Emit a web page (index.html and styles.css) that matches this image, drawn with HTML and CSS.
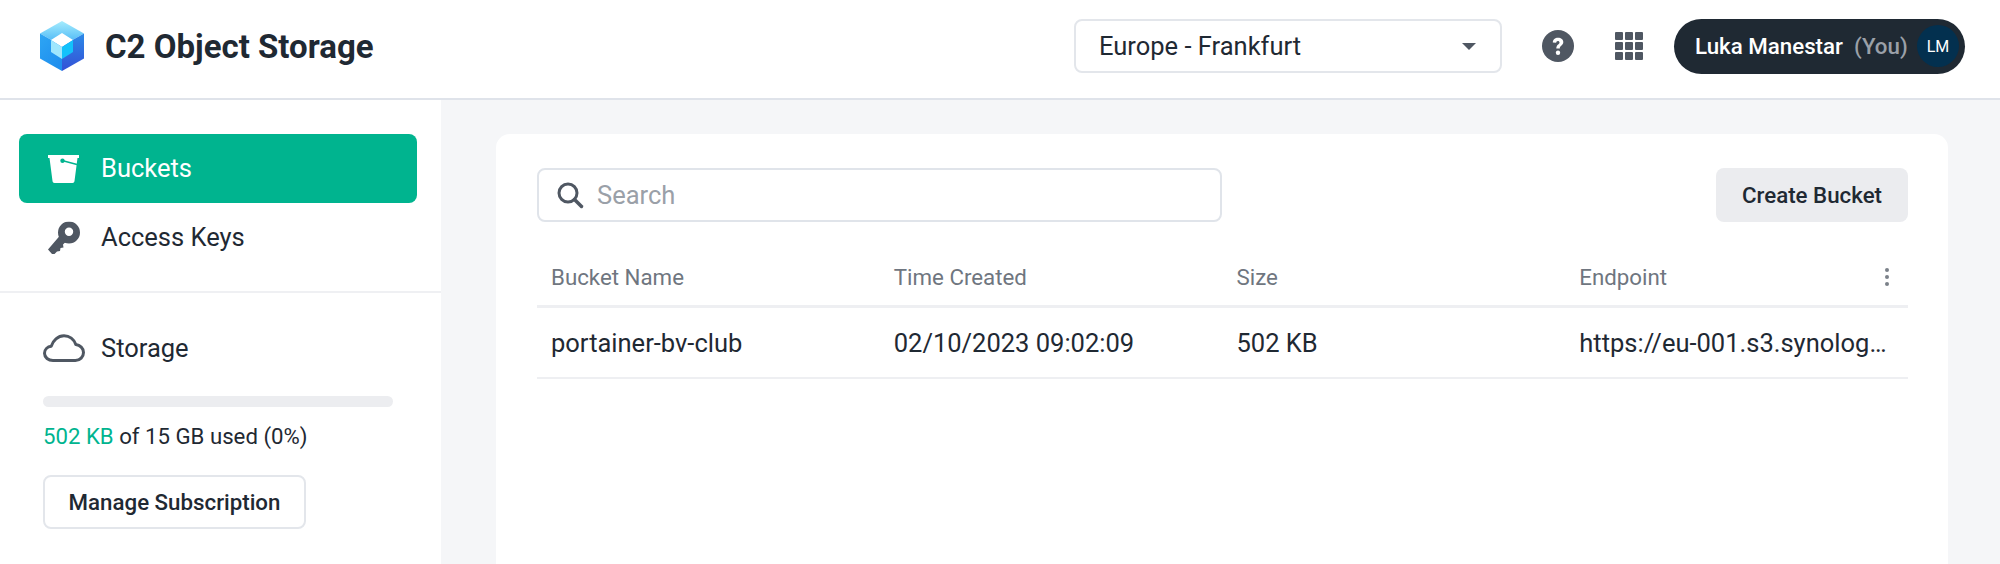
FILE: index.html
```html
<!DOCTYPE html>
<html lang="en">
<head>
  <meta charset="UTF-8" />
  <title>C2 Object Storage</title>
  <link rel="stylesheet" href="styles.css">
</head>
<body>

  <header class="topbar">
    <div class="brand">
      <svg class="brand-logo" viewBox="0 0 44 50" width="44" height="50">
        <defs>
          <linearGradient id="cubeTop" x1="0" y1="0" x2="0" y2="1">
            <stop offset="0" stop-color="#a5ecfd" />
            <stop offset="1" stop-color="#3fb0f5" />
          </linearGradient>
          <linearGradient id="cubeLeft" x1="0" y1="0" x2="0.6" y2="1">
            <stop offset="0" stop-color="#2ea6f4" />
            <stop offset="1" stop-color="#1f8fee" />
          </linearGradient>
          <linearGradient id="cubeRight" x1="0.5" y1="0" x2="0.5" y2="1">
            <stop offset="0" stop-color="#2b8ae8" />
            <stop offset="1" stop-color="#3450d6" />
          </linearGradient>
        </defs>
        <polygon points="22,0 44,12.5 22,25 0,12.5" fill="url(#cubeTop)" />
        <polygon points="0,12.5 22,25 22,50 0,37.5" fill="url(#cubeLeft)" />
        <polygon points="44,12.5 22,25 22,50 44,37.5" fill="url(#cubeRight)" />
        <polygon points="22,12 33,19 22,26 11,19" fill="#ffffff" />
        <polygon points="11,19 22,26 22,38 11,31" fill="#9fe6fd" />
        <polygon points="33,19 22,26 22,38 33,31" fill="#12c2fb" />
      </svg>
      <span class="brand-name">C2 Object Storage</span>
    </div>

    <div class="topbar-right">
      <div class="region-select">
        <span>Europe - Frankfurt</span>
        <span class="caret"></span>
      </div>
      <svg class="help-icon" viewBox="0 0 32 32" width="32" height="32">
        <circle cx="16" cy="16" r="16" fill="#4f5762" />
        <path d="M10.800 12.600c0-3 2.200-4.800 5.300-4.800 3 0 5.200 1.700 5.200 4.300 0 3.500-3.500 3.500-3.500 6.300h-3.500c0-4 3.200-4.100 3.200-6 0-.9-.7-1.500-1.600-1.500-1 0-1.700.7-1.700 1.800z" fill="#fff" />
        <circle cx="16" cy="22.800" r="2.200" fill="#fff" />
      </svg>
      <div class="apps-icon">
        <i></i><i></i><i></i><i></i><i></i><i></i><i></i><i></i><i></i>
      </div>
      <div class="user-pill">
        <span class="user-name">Luka Manestar</span>
        <span class="user-you">(You)</span>
        <span class="avatar">LM</span>
      </div>
    </div>
  </header>

  <div class="layout">
    <aside class="sidebar">
      <nav class="nav">
        <a class="nav-item active">
          <svg class="nav-icon" viewBox="0 0 31 28" width="31" height="28">
            <path d="M0 0h31v3h-1.500L26.500 26c-.1 1.200-.9 2-2 2H6.500c-1.100 0-1.900-.8-2-2L1.500 3H0z" fill="#fff" />
            <line x1="14" y1="5.500" x2="29" y2="9.500" stroke="#00b48f" stroke-width="1.600" />
            <circle cx="14.500" cy="5.800" r="2.200" fill="#00b48f" />
          </svg>
          Buckets
        </a>
        <a class="nav-item">
          <svg class="nav-icon" viewBox="0 0 32 33" width="32" height="33">
            <path fill-rule="evenodd" d="M21 0a11 11 0 1 1 0 22a11 11 0 0 1 0-22zM21 6a4.200 4.200 0 1 0 0 8.400a4.200 4.200 0 0 0 0-8.400z" fill="#4f5762" />
            <polygon points="12,14 18,20 15,23 15.500,26 12.500,26.500 12,29.500 9,30 6.500,32.500 4,32.500 0,28" fill="#4f5762" />
          </svg>
          Access Keys
        </a>
      </nav>

      <div class="storage">
        <div class="storage-title">
          <svg class="storage-icon" viewBox="0 0 42 28" width="42" height="28">
            <path d="M10 26.500c-4.700 0-8.500-3-8.500-7.200 0-3.800 3-6.700 6.800-7.100C9.900 6.300 15 1.800 21 1.800c5.500 0 10 3.600 11.800 8.800 4.300.5 7.700 3.700 7.700 7.900 0 4.500-3.500 8-8.100 8z" fill="none" stroke="#4f5762" stroke-width="3" stroke-linejoin="round" />
          </svg>
          Storage
        </div>
        <div class="usage-bar"></div>
        <div class="usage-text"><span class="usage-value">502 KB</span> of 15 GB used (0%)</div>
        <button class="btn-outline">Manage Subscription</button>
      </div>
    </aside>

    <main class="content">
      <section class="card">
        <div class="toolbar">
          <div class="search">
            <svg class="search-icon" viewBox="0 0 28 28" width="28" height="28">
              <circle cx="12" cy="12" r="9" fill="none" stroke="#4f5762" stroke-width="3" />
              <line x1="18.500" y1="18.500" x2="25.500" y2="25.500" stroke="#4f5762" stroke-width="3.500" stroke-linecap="round" />
            </svg>
            <span class="search-placeholder">Search</span>
          </div>
          <button class="btn-grey">Create Bucket</button>
        </div>

        <div class="table">
          <div class="table-row table-head">
            <div class="cell">Bucket Name</div>
            <div class="cell">Time Created</div>
            <div class="cell">Size</div>
            <div class="cell cell-last">
              Endpoint
              <span class="dots"><i></i><i></i><i></i></span>
            </div>
          </div>
          <div class="table-row table-body">
            <div class="cell">portainer-bv-club</div>
            <div class="cell">02/10/2023 09:02:09</div>
            <div class="cell">502 KB</div>
            <div class="cell cell-clip">https://eu-001.s3.synologyc2.net</div>
          </div>
        </div>
      </section>
    </main>
  </div>

</body>
</html>
```

FILE: styles.css
```css
* {
  box-sizing: border-box;
}

html, body {
  height: 100%;
}

body {
  margin: 0;
  background: #f5f6f8;
  color: #1f2933;
  font-family: Roboto, 'Liberation Sans', sans-serif;
  font-size: 25.5px;
  overflow: hidden;
}

/* Top bar */
.topbar {
  display: flex;
  align-items: center;
  justify-content: space-between;
  height: 100px;
  padding: 0 35px 6px 40px;
  background: #fff;
  border-bottom: 2px solid #dfe3ea;
}

.brand {
  display: flex;
  align-items: center;
  gap: 21px;
}

.brand-name {
  font-size: 33px;
  font-weight: 700;
  color: #1f2933;
}

.topbar-right {
  display: flex;
  align-items: center;
}

.region-select {
  display: flex;
  align-items: center;
  justify-content: space-between;
  width: 428px;
  height: 54px;
  padding: 0 24px 0 23px;
  border: 2px solid #e3e6eb;
  border-radius: 8px;
}

.caret {
  width: 0;
  height: 0;
  border-left: 7px solid transparent;
  border-right: 7px solid transparent;
  border-top: 7px solid #4f5762;
}

.help-icon {
  margin-left: 40px;
}

.apps-icon {
  display: grid;
  grid-template-columns: repeat(3, 8px);
  gap: 2px;
  margin-left: 41px;
}

.apps-icon i {
  width: 8px;
  height: 8px;
  border-radius: 1px;
  background: #4f5762;
}

.user-pill {
  display: flex;
  align-items: center;
  width: 291px;
  height: 55px;
  margin-left: 31px;
  padding: 0 6px 0 21px;
  border-radius: 28px;
  background: #1f2933;
  color: #fff;
  font-size: 22.3px;
  font-weight: 500;
}

.user-you {
  margin-left: 11px;
  color: #9aa0a8;
}

.avatar {
  display: flex;
  align-items: center;
  justify-content: center;
  width: 42px;
  height: 42px;
  margin-left: auto;
  border-radius: 50%;
  background: #03304f;
  font-size: 16px;
  font-weight: 400;
}

/* Page layout */
.layout {
  display: flex;
  height: 464px;
}

.sidebar {
  width: 441px;
  flex-shrink: 0;
  background: #fff;
}

.nav {
  padding: 34px 24px 19px 19px;
  border-bottom: 2px solid #eff0f3;
}

.nav-item {
  display: flex;
  align-items: center;
  height: 69px;
  padding: 0 0 2px 82px;
  position: relative;
  border-radius: 8px;
}

.nav-item.active {
  background: #00b48f;
  color: #fff;
}

.nav-icon {
  position: absolute;
  left: 29px;
  top: 50%;
  transform: translateY(-50%);
}

.storage {
  padding: 36px 0 0 43px;
}

.storage-title {
  display: flex;
  align-items: center;
  gap: 16px;
  height: 38px;
}

.usage-bar {
  width: 350px;
  height: 11px;
  margin-top: 29px;
  border-radius: 6px;
  background: #ecedf0;
}

.usage-text {
  margin-top: 16px;
  line-height: 27px;
  font-size: 22.2px;
}

.usage-value {
  color: #00b48f;
}

.btn-outline {
  display: block;
  width: 263px;
  height: 54px;
  margin-top: 25px;
  padding: 0;
  border: 2px solid #e3e6eb;
  border-radius: 8px;
  background: #fff;
  color: #1f2933;
  font-family: inherit;
  font-size: 22.3px;
  font-weight: 500;
}

/* Main card */
.content {
  flex: 1;
  padding: 34px 52px 0 55px;
}

.card {
  height: 100%;
  padding: 34px 40px 0 41px;
  border-radius: 14px 14px 0 0;
  background: #fff;
}

.toolbar {
  display: flex;
  justify-content: space-between;
}

.search {
  display: flex;
  align-items: center;
  gap: 13px;
  width: 685px;
  height: 54px;
  padding-left: 17px;
  border: 2px solid #e0e4ea;
  border-radius: 8px;
}

.search-placeholder {
  color: #9aa0a8;
}

.btn-grey {
  width: 192px;
  height: 54px;
  padding: 0;
  border: none;
  border-radius: 8px;
  background: #ebecef;
  color: #1f2933;
  font-family: inherit;
  font-size: 22.3px;
  font-weight: 500;
}

.table {
  margin-top: 28px;
}

.table-row {
  display: grid;
  grid-template-columns: repeat(4, 1fr);
  align-items: center;
}

.table-head {
  height: 58px;
  padding-bottom: 2px;
  border-bottom: 3px solid #eeeff2;
  color: #6f7680;
  font-size: 22.3px;
}

.table-body {
  height: 71px;
  border-bottom: 2px solid #eeeff2;
}

.cell {
  min-width: 0;
  padding: 0 22px 0 14px;
}

.cell-last {
  display: flex;
  justify-content: space-between;
  align-items: center;
  padding-right: 19px;
}

.cell-clip {
  padding-right: 12px;
  white-space: nowrap;
  overflow: hidden;
  text-overflow: ellipsis;
}

.dots {
  display: flex;
  flex-direction: column;
  gap: 3px;
}

.dots i {
  width: 4px;
  height: 4px;
  border-radius: 50%;
  background: #7b8189;
}
```
